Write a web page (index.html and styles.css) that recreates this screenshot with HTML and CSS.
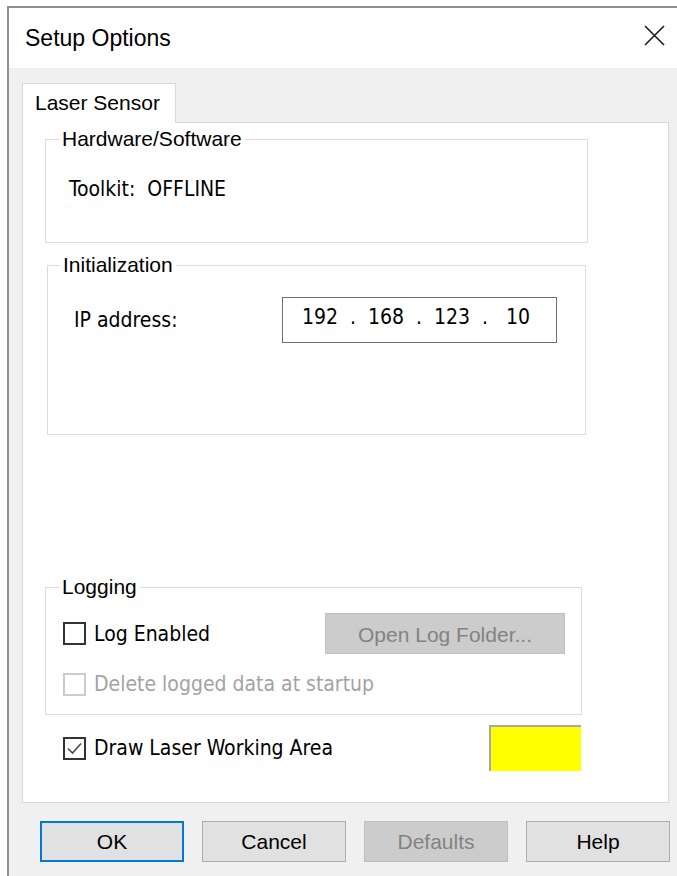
FILE: index.html
```html
<!DOCTYPE html>
<html lang="en">
<head>
<meta charset="utf-8">
<title>Setup Options</title>
<link rel="stylesheet" href="styles.css">
</head>
<body>
<div class="window">
  <div class="titlebar">
    <span class="title">Setup Options</span>
    <span class="close" aria-label="Close">
      <svg width="21" height="21" viewBox="0 0 21 21"><path d="M1 1 L20 20 M20 1 L1 20" stroke="#1a1a1a" stroke-width="1.6" fill="none"/></svg>
    </span>
  </div>
  <div class="client">
    <div class="tabs"><div class="tab">Laser Sensor</div></div>
    <div class="panel">
      <fieldset class="group group-hw">
        <legend>Hardware/Software</legend>
        <div class="status">Toolkit:&nbsp;&nbsp;OFFLINE</div>
      </fieldset>
      <fieldset class="group group-init">
        <legend>Initialization</legend>
        <div class="ip-row">
          <span class="ip-label">IP address:</span>
          <div class="ip-box">
            <span class="octet">192</span><span class="dot">.</span>
            <span class="octet">168</span><span class="dot">.</span>
            <span class="octet">123</span><span class="dot">.</span>
            <span class="octet">10</span>
          </div>
        </div>
      </fieldset>
      <fieldset class="group group-log">
        <legend>Logging</legend>
        <div class="log-row">
          <label class="check"><span class="box"></span>Log Enabled</label>
          <button class="btn btn-disabled btn-folder">Open Log Folder...</button>
        </div>
        <div class="log-row2">
          <label class="check disabled"><span class="box"></span>Delete logged data at startup</label>
        </div>
      </fieldset>
      <div class="draw-row">
        <label class="check"><span class="box"><svg width="19" height="19" viewBox="0 0 19 19"><path d="M3 9.5 L7.5 14 L16 4.5" stroke="#4a4a4a" stroke-width="1.6" fill="none"/></svg></span>Draw Laser Working Area</label>
        <div class="swatch"></div>
      </div>
    </div>
    <div class="buttons">
      <button class="btn btn-default">OK</button>
      <button class="btn">Cancel</button>
      <button class="btn btn-disabled">Defaults</button>
      <button class="btn">Help</button>
    </div>
  </div>
</div>
</body>
</html>
```

FILE: styles.css
```css
html, body {
  margin: 0;
}

body {
  background: #ffffff;
  padding: 6px 0 0 7px;
  height: 876px;
  box-sizing: border-box;
  overflow: hidden;
  font-family: "Liberation Sans", Arial, sans-serif;
  color: #000;
}

.window {
  border-top: 2px solid #8f8f8f;
  border-left: 2px solid #8f8f8f;
  height: 868px;
  width: 668px;
  background: #f0f0f0;
}

/* title bar */
.titlebar {
  height: 60px;
  background: #ffffff;
  display: flex;
  align-items: flex-start;
  justify-content: space-between;
}

.title {
  font-size: 23px;
  line-height: 60px;
  padding-left: 16px;
}

.close {
  display: block;
  margin-top: 17px;
  margin-right: 12px;
  width: 21px;
  height: 21px;
}

.close svg {
  display: block;
}

/* dialog body */
.client {
  padding: 15px 0 0 13px;
}

.tabs {
  display: flex;
}

.tab {
  position: relative;
  z-index: 1;
  width: 154px;
  height: 40px;
  margin-bottom: -1px;
  box-sizing: border-box;
  background: #fff;
  border: 1px solid #d9d9d9;
  border-bottom: none;
  font-size: 21px;
  line-height: 38px;
  padding-left: 12px;
}

.panel {
  width: 647px;
  height: 681px;
  box-sizing: border-box;
  background: #fff;
  border: 1px solid #d9d9d9;
  padding-top: 4px;
}

/* group boxes */
.group {
  margin: 0;
  padding: 0;
  min-inline-size: 0;
  border: 1px solid #dcdcdc;
  box-sizing: border-box;
}

.group legend {
  font-size: 21px;
  line-height: 24px;
  padding: 0 3px;
  margin-left: 13px;
}

.status,
.ip-row,
.check,
.btn-folder {
  font-family: "DejaVu Sans Condensed", "DejaVu Sans", sans-serif;
  font-size: 21px;
}

.group-hw {
  margin-left: 22px;
  width: 543px;
  padding-bottom: 41px;
}

.status {
  margin-top: 26px;
  padding-left: 23px;
  line-height: 24px;
}

.group-init {
  margin-top: 10px;
  margin-left: 24px;
  width: 539px;
  padding-bottom: 91px;
}

.group-init legend {
  margin-left: 12px;
}

.ip-row {
  margin-top: 20px;
  padding-left: 26px;
  display: flex;
  align-items: center;
  line-height: 24px;
}

.ip-label {
  width: 208px;
}

.ip-box {
  width: 275px;
  height: 46px;
  box-sizing: border-box;
  border: 1px solid #6f6f6f;
  display: flex;
  align-items: center;
  padding: 0 0 6px 12px;
}

.octet {
  width: 50px;
  text-align: center;
}

.dot {
  width: 16px;
  text-align: center;
}

.group-log {
  margin-top: 140px;
  margin-left: 22px;
  width: 537px;
  padding: 0 16px 18px 17px;
}

.group-log legend {
  margin-left: -4px;
}

.log-row {
  margin-top: 14px;
  height: 41px;
  display: flex;
  align-items: center;
  justify-content: space-between;
}

.log-row2 {
  margin-top: 18px;
  height: 24px;
  display: flex;
  align-items: center;
}

/* check boxes */
.check {
  display: flex;
  align-items: center;
  line-height: 24px;
}

.box {
  width: 23px;
  height: 23px;
  box-sizing: border-box;
  border: 2px solid #333;
  margin-right: 8px;
  background: #fff;
  display: flex;
  align-items: center;
  justify-content: center;
}

.box svg {
  display: block;
}

.check.disabled {
  color: #a3a3a3;
}

.check.disabled .box {
  border-color: #cccccc;
}

.draw-row {
  margin-top: 10px;
  width: 558px;
  height: 46px;
  padding-left: 40px;
  box-sizing: border-box;
  display: flex;
  align-items: center;
  justify-content: space-between;
}

.swatch {
  width: 92px;
  height: 46px;
  box-sizing: border-box;
  background: #ffff00;
  border-top: 2px solid #a8a8a8;
  border-left: 2px solid #a8a8a8;
}

/* push buttons */
.btn {
  width: 144px;
  height: 41px;
  box-sizing: border-box;
  background: #e1e1e1;
  border: 1px solid #adadad;
  font-family: "Liberation Sans", Arial, sans-serif;
  font-size: 21px;
  color: #000;
  padding: 0;
  margin: 0;
}

.btn-default {
  border: 2px solid #0078d7;
}

.btn-disabled {
  background: #cccccc;
  border-color: #bfbfbf;
  color: #838383;
}

.btn-folder {
  width: 240px;
  padding-top: 2px;
}

.buttons {
  display: flex;
  gap: 18px;
  margin-top: 18px;
  padding-left: 18px;
}
```
